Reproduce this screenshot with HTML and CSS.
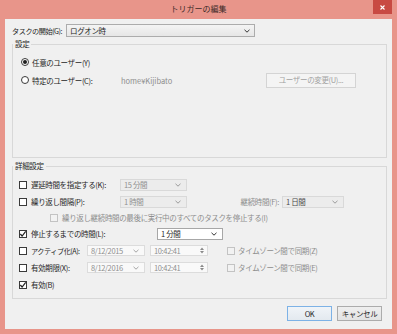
FILE: index.html
```html
<!DOCTYPE html>
<html lang="ja">
<head>
    <meta charset="UTF-8" />
    <title>トリガーの編集</title>
    <link rel="stylesheet" href="styles.css">
</head>
<body>
    <div class="window">
        <div class="titlebar">
            <span></span>
            <span class="title">トリガーの編集</span>
            <span class="close">
                <svg width="5" height="5" viewBox="0 0 5 5"><path d="M0.5 0.5 L4.5 4.5 M4.5 0.5 L0.5 4.5" stroke="#fff" stroke-width="1.1" /></svg>
            </span>
        </div>

        <div class="client">
            <div class="start-row">
                <span class="start-label tight">タスクの開始(G):</span>
                <div class="combo combo-start">
                    <span class="combo-text">ログオン時</span>
                    <svg class="chev" width="6" height="4" viewBox="0 0 6 4"><path d="M0.5 0.8 L3 3.2 L5.5 0.8" fill="none" stroke="#333" stroke-width="1" /></svg>
                </div>
            </div>

            <fieldset class="group group-settings">
                <legend>設定</legend>
                <div class="group-body">
                    <div class="row row-radio">
                        <span class="radio checked"></span>
                        <span>任意のユーザー(Y)</span>
                    </div>
                    <div class="row row-radio">
                        <span class="radio"></span>
                        <span class="user-label">特定のユーザー(C):</span>
                        <span class="user-name">home¥Kijibato</span>
                        <span class="btn btn-user">ユーザーの変更(U)...</span>
                    </div>
                </div>
            </fieldset>

            <fieldset class="group group-advanced">
                <legend>詳細設定</legend>
                <div class="group-body">
                    <!-- 遅延 -->
                    <div class="row">
                        <span class="cb"></span>
                        <span class="lbl w-89">遅延時間を指定する(K):</span>
                        <div class="combo combo-disabled w-67">
                            <span class="combo-text">15 分間</span>
                            <svg class="chev" width="6" height="4" viewBox="0 0 6 4"><path d="M0.5 0.8 L3 3.2 L5.5 0.8" fill="none" stroke="#9a9a9a" stroke-width="1" /></svg>
                        </div>
                    </div>
                    <!-- 繰り返し -->
                    <div class="row">
                        <span class="cb"></span>
                        <span class="lbl w-89">繰り返し間隔(P):</span>
                        <div class="combo combo-disabled w-67">
                            <span class="combo-text">1 時間</span>
                            <svg class="chev" width="6" height="4" viewBox="0 0 6 4"><path d="M0.5 0.8 L3 3.2 L5.5 0.8" fill="none" stroke="#9a9a9a" stroke-width="1" /></svg>
                        </div>
                        <span class="lbl lbl-right disabled">継続時間(F):</span>
                        <div class="combo combo-disabled combo-dark w-62">
                            <span class="combo-text">1 日間</span>
                            <svg class="chev" width="6" height="4" viewBox="0 0 6 4"><path d="M0.5 0.8 L3 3.2 L5.5 0.8" fill="none" stroke="#9a9a9a" stroke-width="1" /></svg>
                        </div>
                    </div>
                    <div class="row row-short row-indent">
                        <span class="cb cb-disabled"></span>
                        <span class="lbl disabled">繰り返し継続時間の最後に実行中のすべてのタスクを停止する(I)</span>
                    </div>
                    <!-- 停止 -->
                    <div class="row row-short">
                        <span class="cb">
                            <svg width="8" height="8" viewBox="0 0 8 8"><path d="M1.3 4 L3.1 6 L6.7 1.4" fill="none" stroke="#222" stroke-width="1.2" /></svg>
                        </span>
                        <span class="lbl w-126">停止するまでの時間(L):</span>
                        <div class="combo combo-enabled w-66">
                            <span class="combo-text">1 分間</span>
                            <svg class="chev" width="6" height="4" viewBox="0 0 6 4"><path d="M0.5 0.8 L3 3.2 L5.5 0.8" fill="none" stroke="#333" stroke-width="1" /></svg>
                        </div>
                    </div>
                    <!-- アクティブ化 -->
                    <div class="row">
                        <span class="cb"></span>
                        <span class="lbl w-56 tight">アクティブ化(A):</span>
                        <div class="combo combo-date">
                            <span class="combo-text">8/12/2015</span>
                            <svg class="chev" width="6" height="4" viewBox="0 0 6 4"><path d="M0.5 0.8 L3 3.2 L5.5 0.8" fill="none" stroke="#a5a5a5" stroke-width="1" /></svg>
                        </div>
                        <div class="combo combo-date combo-time">
                            <span class="combo-text">10:42:41</span>
                            <svg class="spin" width="4" height="7" viewBox="0 0 4 7"><path d="M0 3 L2 0.5 L4 3 Z M0 4 L2 6.5 L4 4 Z" fill="#8a8a8a" /></svg>
                        </div>
                        <span class="cb cb-disabled cb-sync"></span>
                        <span class="lbl disabled">タイムゾーン間で同期(Z)</span>
                    </div>
                    <!-- 有効期限 -->
                    <div class="row">
                        <span class="cb"></span>
                        <span class="lbl w-56">有効期限(X):</span>
                        <div class="combo combo-date">
                            <span class="combo-text">8/12/2016</span>
                            <svg class="chev" width="6" height="4" viewBox="0 0 6 4"><path d="M0.5 0.8 L3 3.2 L5.5 0.8" fill="none" stroke="#a5a5a5" stroke-width="1" /></svg>
                        </div>
                        <div class="combo combo-date combo-time">
                            <span class="combo-text">10:42:41</span>
                            <svg class="spin" width="4" height="7" viewBox="0 0 4 7"><path d="M0 3 L2 0.5 L4 3 Z M0 4 L2 6.5 L4 4 Z" fill="#8a8a8a" /></svg>
                        </div>
                        <span class="cb cb-disabled cb-sync"></span>
                        <span class="lbl disabled">タイムゾーン間で同期(E)</span>
                    </div>
                    <!-- 有効 -->
                    <div class="row">
                        <span class="cb">
                            <svg width="8" height="8" viewBox="0 0 8 8"><path d="M1.3 4 L3.1 6 L6.7 1.4" fill="none" stroke="#222" stroke-width="1.2" /></svg>
                        </span>
                        <span class="lbl">有効(B)</span>
                    </div>
                </div>
            </fieldset>

            <div class="actions">
                <span class="btn btn-default">OK</span>
                <span class="btn">キャンセル</span>
            </div>
        </div>
    </div>
</body>
</html>
```

FILE: styles.css
```css
* {
    box-sizing: border-box;
}

body {
    margin: 0;
    font-family: "Noto Sans CJK JP", "Noto Sans", sans-serif;
    font-size: 7.5px;
    letter-spacing: -0.35px;
    color: #262626;
    background: #e8958a;
}

.window {
    width: 397px;
    height: 334px;
    background: #e8958a;
    display: flex;
    flex-direction: column;
    white-space: nowrap;
}

.titlebar {
    height: 19px;
    display: grid;
    grid-template-columns: 1fr auto 1fr;
    align-items: start;
}

    .titlebar .title {
        font-size: 8px;
        line-height: 18px;
        color: #3a2a28;
        letter-spacing: 0;
    }

    .titlebar .close {
        justify-self: end;
        width: 19px;
        height: 14px;
        margin-right: 5px;
        background: #c84a43;
        display: flex;
        align-items: center;
        justify-content: center;
    }

.client {
    flex: 1;
    margin: 0 5px 5px;
    background: #f0f0f0;
    display: flex;
    flex-direction: column;
}

.start-row {
    display: flex;
    align-items: center;
    height: 13px;
    margin-top: 5px;
    padding-left: 7px;
}

.start-label {
    width: 54px;
    flex: none;
}

.tight {
    font-size: 7.2px;
    letter-spacing: -0.5px;
}

.combo {
    height: 12px;
    flex: none;
    display: flex;
    align-items: center;
    justify-content: space-between;
    padding: 0 5px 0 3px;
    border: 1px solid #d9d9d9;
    line-height: 10px;
}

.combo-start {
    width: 189px;
    height: 13px;
    border-color: #acacac;
    background: linear-gradient(#f4f4f4, #e6e6e6);
    padding-right: 4px;
}

.combo-disabled {
    background: #ececec;
    color: #8f8f8f;
}

.combo-dark {
    color: #4a4a4a;
}

.combo-enabled {
    background: #fff;
    border-color: #a7a7a7;
    color: #1e1e1e;
}

.combo-date {
    width: 58px;
    height: 11px;
    background: #f9f9f9;
    border-color: #dcdcdc;
    color: #8f8f8f;
    margin-right: 5px;
}

.combo-time {
    margin-right: 19px;
    padding-right: 3px;
}

.w-56 { width: 56px; }
.w-62 { width: 62px; }
.w-66 { width: 66px; }
.w-67 { width: 67px; }
.w-89 { width: 89px; }
.w-126 { width: 126px; }

.group {
    margin: 0 5px 0 7px;
    padding: 0;
    border: 1px solid #d8d8d8;
    min-width: 0;
}

    .group legend {
        padding: 0 2px;
        margin: 0;
        line-height: 10px;
    }

.group-settings {
    margin-top: 2px;
}

    .group-settings .group-body {
        padding: 4px 0 68px 8px;
    }

.group-advanced {
    margin-top: 3px;
}

    .group-advanced .group-body {
        padding: 5px 0 5px 6px;
    }

.row {
    display: flex;
    align-items: center;
    height: 17px;
}

.row-short {
    height: 16px;
}

.row-radio {
    height: 18px;
}

.row-indent {
    padding-left: 31px;
}

.radio {
    width: 8px;
    height: 8px;
    flex: none;
    border: 1px solid #3a3a3a;
    border-radius: 50%;
    background: #fff;
    margin-right: 3px;
    display: flex;
    align-items: center;
    justify-content: center;
}

    .radio.checked::after {
        content: "";
        width: 4px;
        height: 4px;
        border-radius: 50%;
        background: #1e1e1e;
    }

.user-label {
    width: 89px;
    flex: none;
}

.user-name {
    width: 145px;
    flex: none;
    color: #8d8d8d;
    letter-spacing: 0;
}

.btn {
    height: 15px;
    width: 45px;
    flex: none;
    display: flex;
    align-items: center;
    justify-content: center;
    border: 1px solid #acacac;
    background: linear-gradient(#efefef, #e3e3e3);
    line-height: 10px;
}

.btn-user {
    width: 90px;
    border-color: #d4d4d4;
    background: #f4f4f4;
    color: #a2a2a2;
}

.btn-default {
    border-color: #7db2e6;
    background: linear-gradient(#f0f4f8, #e3e9ef);
}

.cb {
    width: 8px;
    height: 8px;
    flex: none;
    border: 1px solid #3a3a3a;
    background: #fff;
    margin-right: 4px;
    display: flex;
    align-items: center;
    justify-content: center;
}

    .cb svg {
        margin: -1px;
    }

.cb-disabled {
    border-color: #c3c3c3;
    background: #f2f2f2;
}

.cb-sync {
    margin-right: 3px;
}

.lbl {
    flex: none;
    line-height: 10px;
}

.lbl-right {
    width: 92px;
    text-align: right;
    margin-right: 3px;
}

.disabled {
    color: #8d8d8d;
}

.actions {
    display: flex;
    justify-content: flex-end;
    gap: 5px;
    margin-top: 7px;
    padding-right: 10px;
}
```
